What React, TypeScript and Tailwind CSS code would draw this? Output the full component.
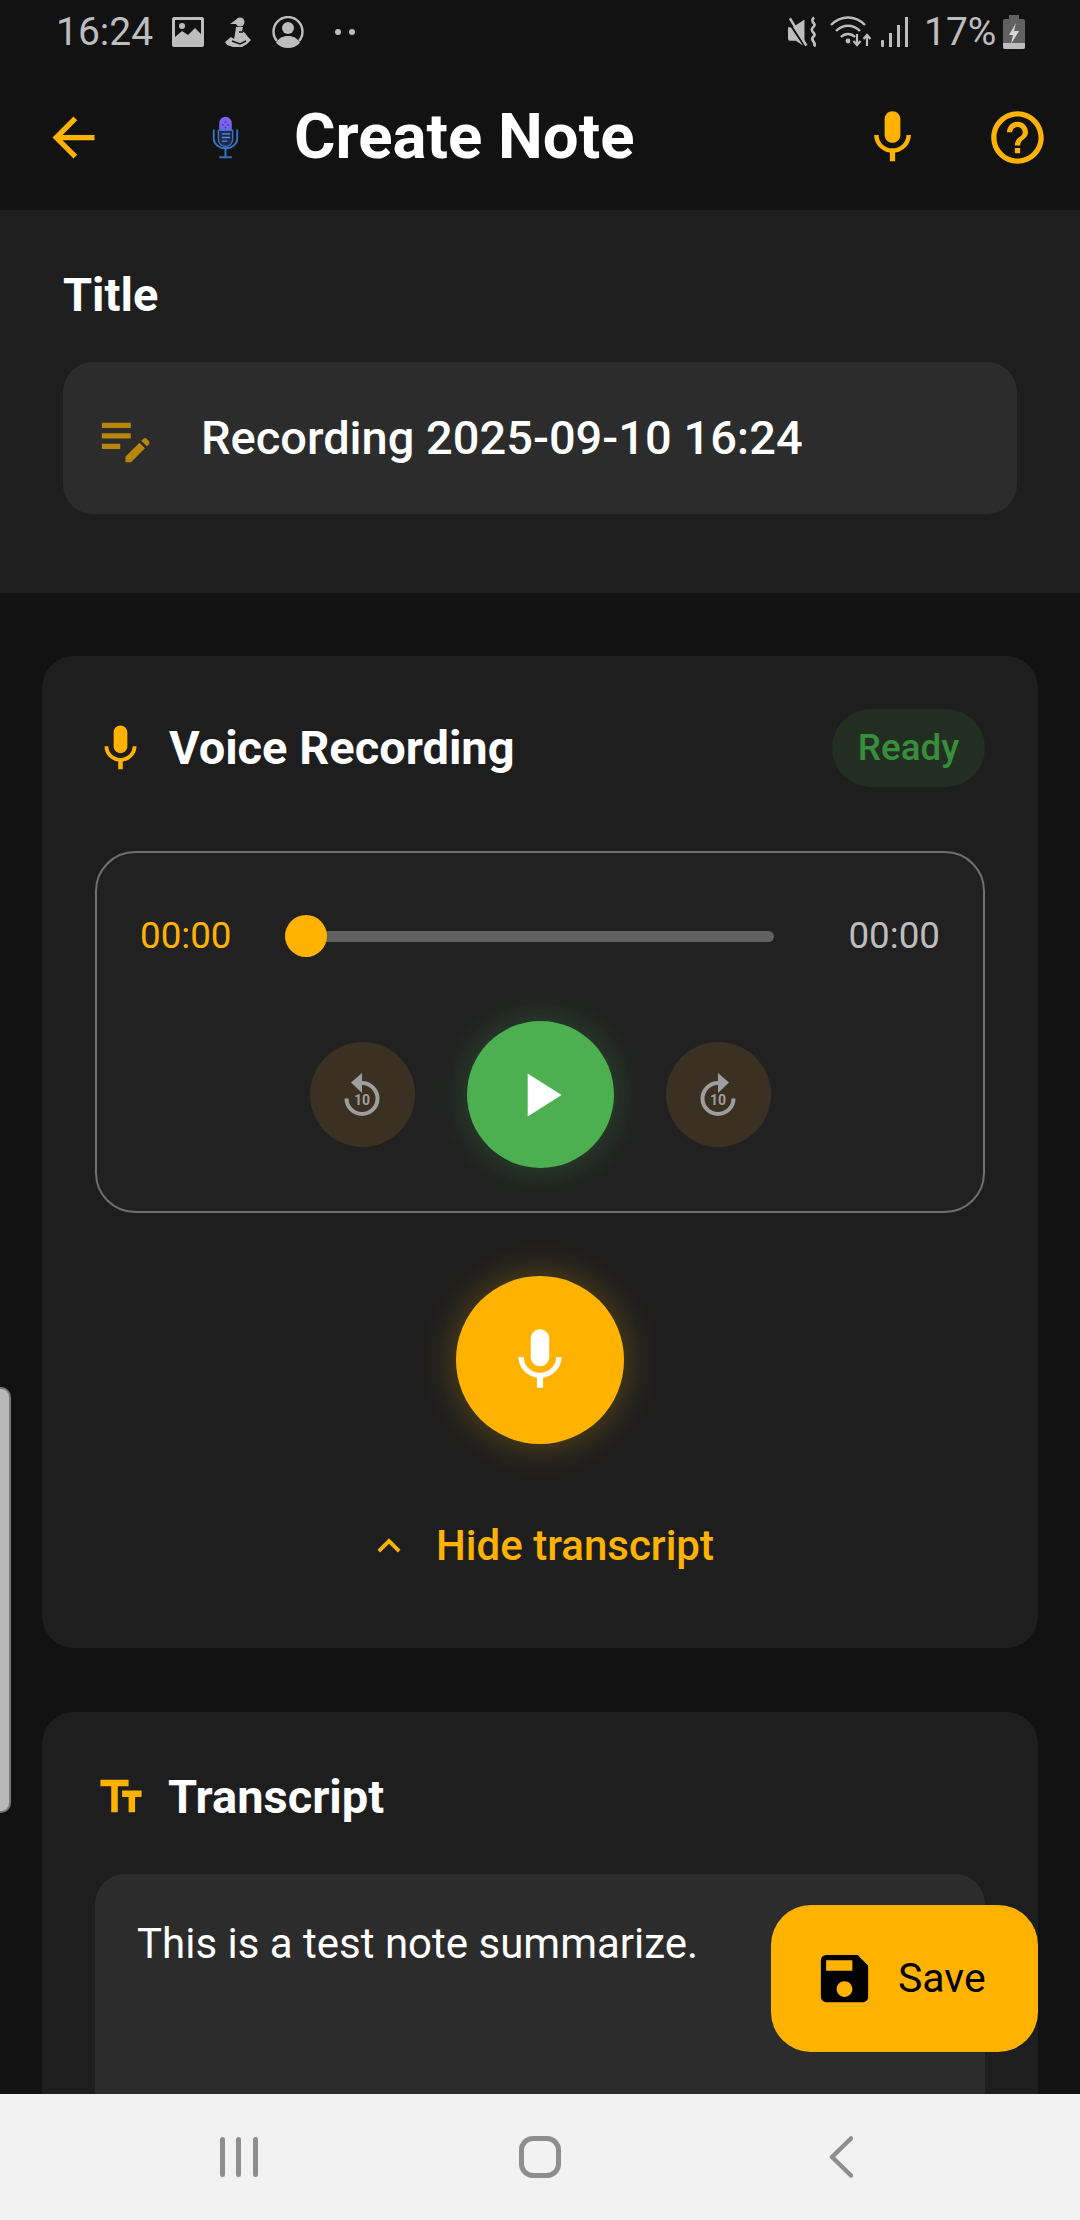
import React from 'react';
import { MdArrowBack, MdMic, MdHelpOutline, MdEditNote, MdPlayArrow, MdExpandLess, MdTextFields, MdSave } from 'react-icons/md';

const Logo = () => (
  <svg width="27" height="45" viewBox="0 0 30 48" fill="none">
    <defs>
      <linearGradient id="logoFill" x1="0" y1="0" x2="0" y2="1">
        <stop offset="0" stopColor="#8b5cf6" />
        <stop offset="1" stopColor="#4f72e8" />
      </linearGradient>
    </defs>
    <rect x="8" y="1" width="14" height="28" rx="7" fill="url(#logoFill)" />
    <circle cx="15" cy="7" r="1" fill="#3b3b8f" />
    <circle cx="12" cy="10" r="1" fill="#3b3b8f" />
    <circle cx="18" cy="10" r="1" fill="#3b3b8f" />
    <circle cx="15" cy="13" r="1" fill="#3b3b8f" />
    <path d="M7 16h16v10a8 8 0 0 1-16 0z" fill="#1d2a4a" stroke="#3f73c4" strokeWidth="1.5" />
    <path d="M2 15v10a13 11 0 0 0 26 0V15M15 36v9M8 46h14" stroke="#3570c0" strokeWidth="2.2" />
    <path d="M11 20h9M11 24h9M11 28h6" stroke="#5f8fe0" strokeWidth="1.4" />
  </svg>
);

// Rewind / forward 10 glyph, the number stays real text
const SkipIcon = ({ flip }: { flip?: boolean }) => (
  <span className="relative flex h-[46px] w-[36px] items-center justify-center">
    <svg width="36" height="46" viewBox="0 0 36 46" fill="none" className={flip ? '-scale-x-100' : ''}>
      <path d="M18 11a15.5 15.5 0 1 1-15.5 15.500" stroke="#9e9e9e" strokeWidth="4" />
      <path d="M18 1v20L7 10.500z" fill="#9e9e9e" />
    </svg>
    <span className="absolute top-[21px] left-0 w-full text-center text-[14px] leading-[14px] font-bold text-[#9e9e9e]">10</span>
  </span>
);

const StatusLeft = () => (
  <div className="flex items-center">
    <span className="w-[96px] text-[39px] leading-[44px] text-[#bdbdbd]">16:24</span>
    <svg width="32" height="30" viewBox="0 0 32 30" className="ml-[20px]">
      <path fillRule="evenodd" d="M2 0h28a2 2 0 0 1 2 2v26a2 2 0 0 1-2 2H2a2 2 0 0 1-2-2V2a2 2 0 0 1 2-2zm1 3v17l7-6 6 4 7-7 6 6V3z" fill="#bdbdbd" />
      <circle cx="10" cy="9" r="3" fill="#bdbdbd" />
    </svg>
    <svg width="27" height="30" viewBox="0 0 27 30" className="ml-[21px]">
      <circle cx="15" cy="5" r="4.500" fill="#bdbdbd" />
      <path d="M5 7l7-5 1 5z" fill="#bdbdbd" />
      <path d="M11 10h7l-1 4 3 2 3 4 3 3-4 4-5 3H8l-6-2-2-3 6-5 3 2 1-5z" fill="#bdbdbd" />
      <path d="M14 15h4M7 24l8 3 6-3" stroke="#121212" strokeWidth="1.400" fill="none" />
    </svg>
    <svg width="32" height="32" viewBox="0 0 32 32" className="ml-[20px]" fill="none">
      <path d="M5 25A14.500 14.500 0 1 1 27 25" stroke="#bdbdbd" strokeWidth="2.400" />
      <circle cx="16" cy="12" r="6" fill="#bdbdbd" />
      <path d="M4 27c3-6 8-7 12-7s9 1 12 7c-3 3-7 5-12 5s-9-2-12-5z" fill="#bdbdbd" />
    </svg>
    <span className="ml-[31px] flex gap-[8px]">
      <span className="h-[6px] w-[6px] rounded-full bg-[#bdbdbd]" />
      <span className="h-[6px] w-[6px] rounded-full bg-[#bdbdbd]" />
    </span>
  </div>
);

const StatusRight = () => (
  <div className="flex items-center">
    <svg width="31" height="32" viewBox="0 0 32 32" fill="none">
      <path d="M0 11h5l12-8v28l-9-6H2a2 2 0 0 1-2-2z" fill="#bdbdbd" />
      <path d="M0 5l18 27" stroke="#121212" strokeWidth="2" />
      <path d="M2 2l17 28" stroke="#bdbdbd" strokeWidth="2.600" />
      <path d="M27 1c-6 5 4 6-1 10-5 5 5 6 0 10-4 4 4 5 1 10" stroke="#bdbdbd" strokeWidth="2.800" />
    </svg>
    <svg width="42" height="32" viewBox="0 0 42 32" fill="none" className="ml-[11px]">
      <path d="M1 9c10-10 24-10 34 0M6 15c7-7 17-7 24 0M11 21c4-4 10-4 14 0" stroke="#bdbdbd" strokeWidth="2.400" />
      <circle cx="18" cy="25" r="2.400" fill="#bdbdbd" />
      <path d="M27 18v10M23.500 25l3.500 4 3.500-4M37 30V20M33.500 23l3.500-4 3.500 4" stroke="#bdbdbd" strokeWidth="2.200" />
    </svg>
    <svg width="27" height="32" viewBox="0 0 27 32" className="ml-[9px]" fill="#bdbdbd">
      <rect x="0" y="24" width="3" height="7" rx="1" />
      <rect x="8" y="17" width="3" height="14" />
      <rect x="16" y="9" width="3" height="22" />
      <rect x="24" y="1" width="3" height="30" />
    </svg>
    <span className="ml-[16px] w-[71px] text-[39px] leading-[44px] text-[#bdbdbd]">17%</span>
    <svg width="22" height="34" viewBox="0 0 22 34" className="ml-[8px]">
      <path d="M6 0h10v4h4a2 2 0 0 1 2 2v26a2 2 0 0 1-2 2H2a2 2 0 0 1-2-2V6a2 2 0 0 1 2-2h4z" fill="#616161" />
      <path d="M0 28h22v4a2 2 0 0 1-2 2H2a2 2 0 0 1-2-2z" fill="#bdbdbd" />
      <path d="M13 8l-7 12h4l-2 9 8-13h-5z" fill="#d6d6d6" />
    </svg>
  </div>
);

export default function App() {
  return (
    <div className="relative flex h-[2220px] w-[1080px] flex-col overflow-hidden bg-[#121212] font-['Roboto',sans-serif] text-white">
      {/* Status bar */}
      <div className="flex h-[64px] items-center justify-between pr-[55px] pl-[56px]">
        <StatusLeft />
        <StatusRight />
      </div>

      {/* App bar */}
      <div className="flex h-[146px] items-center">
        <MdArrowBack className="ml-[42px] text-[63px] text-[#ffb300]" />
        <span className="ml-[107px] flex w-[27px]"><Logo /></span>
        <h1 className="ml-[55px] text-[63.5px] leading-[70px] font-bold">Create Note</h1>
        <MdMic className="ml-auto text-[63px] text-[#ffb300]" />
        <MdHelpOutline className="mr-[31px] ml-[62px] text-[63px] text-[#ffb300]" />
      </div>

      <main className="flex-1 overflow-hidden">
        {/* Title section */}
        <section className="bg-[#1e1e1e] px-[63px] pt-[58px] pb-[79px]">
          <h2 className="text-[47px] leading-[54px] font-bold">Title</h2>
          <div className="mt-[40px] flex h-[152px] items-center rounded-[30px] bg-[#2c2c2c] pl-[31px]">
            <MdEditNote className="text-[63px] text-[#b8860b]" />
            <span className="ml-[44px] text-[47px] leading-[52px] font-medium">Recording 2025-09-10 16:24</span>
          </div>
        </section>

        {/* Voice recording card */}
        <section className="mx-[42px] mt-[63px] rounded-[32px] bg-[#1e1e1e] px-[53px] pt-[53px] pb-[77px]">
          <div className="flex h-[78px] items-center">
            <MdMic className="-ml-[2px] text-[55px] text-[#ffb300]" />
            <h2 className="ml-[21px] text-[47px] leading-[54px] font-bold">Voice Recording</h2>
            <span className="ml-auto flex h-[78px] w-[153px] items-center justify-center rounded-full bg-[#222e22] text-[36.75px] font-medium text-[#388e3c]">Ready</span>
          </div>

          <div className="mt-[64px] h-[362px] rounded-[40px] border-2 border-[#707070] bg-[#212121] px-[43px] pt-[62px]">
            <div className="flex h-[42px] items-center">
              <span className="w-[98px] text-[36.75px] font-[450] text-[#ffb300]">00:00</span>
              <div className="relative ml-[47px] h-[11px] w-[489px] rounded-full bg-[#616161]">
                <span className="absolute -top-[16px] left-0 h-[42px] w-[42px] rounded-full bg-[#ffb300]" />
              </div>
              <span className="ml-auto text-[36.75px] font-[450] text-[#bdbdbd]">00:00</span>
            </div>
            <div className="mt-[64px] flex items-center justify-center gap-[52px]">
              <span className="flex h-[105px] w-[105px] items-center justify-center rounded-full bg-[#3a3122]"><SkipIcon /></span>
              <span className="flex h-[147px] w-[147px] items-center justify-center rounded-full bg-[#4caf50] shadow-[0_0_36px_rgba(76,175,80,0.3)]">
                <MdPlayArrow className="text-[74px] text-white" />
              </span>
              <span className="flex h-[105px] w-[105px] items-center justify-center rounded-full bg-[#3a3122]"><SkipIcon flip /></span>
            </div>
          </div>

          <div className="mt-[63px] flex justify-center">
            <span className="flex h-[168px] w-[168px] items-center justify-center rounded-full bg-[#ffb300] shadow-[0_0_36px_rgba(255,179,0,0.3)]">
              <MdMic className="text-[74px] text-white" />
            </span>
          </div>

          <div className="mt-[77px] flex h-[50px] items-center justify-center">
            <MdExpandLess className="text-[46px] text-[#ffb300]" />
            <span className="ml-[24px] text-[42px] leading-[50px] font-medium text-[#ffb300]">Hide transcript</span>
          </div>
        </section>

        {/* Transcript card */}
        <section className="mx-[42px] mt-[64px] h-[500px] rounded-[32px] bg-[#1e1e1e] px-[53px] pt-[57px]">
          <div className="flex h-[56px] items-center">
            <MdTextFields className="text-[52px] text-[#ffb300]" />
            <h2 className="ml-[21px] text-[47px] leading-[54px] font-bold">Transcript</h2>
          </div>
          <div className="mt-[49px] h-[400px] rounded-[30px] bg-[#2c2c2c] px-[42px] pt-[43px]">
            <p className="text-[42px] leading-[54px]">This is a test note summarize.</p>
          </div>
        </section>
      </main>

      {/* Navigation bar */}
      <nav className="grid h-[126px] grid-cols-3 items-center bg-[#f2f2f2] px-[88px]">
        <svg width="38" height="42" viewBox="0 0 38 42" className="justify-self-center" fill="#8e8e8e">
          <rect x="0" y="1" width="5" height="40" rx="2.500" />
          <rect x="16" y="1" width="5" height="40" rx="2.500" />
          <rect x="33" y="1" width="5" height="40" rx="2.500" />
        </svg>
        <span className="h-[42px] w-[42px] justify-self-center rounded-[14px] border-[5px] border-[#8e8e8e]" />
        <svg width="24" height="42" viewBox="0 0 24 42" className="justify-self-center" fill="none">
          <path d="M22 2.500L3 21l19 18.500" stroke="#8e8e8e" strokeWidth="4.500" strokeLinecap="round" strokeLinejoin="round" />
        </svg>
      </nav>

      {/* Edge panel handle */}
      <div className="absolute top-[1387px] left-0 h-[426px] w-[11px] rounded-r-[10px] border-y-2 border-r-2 border-[#777777] bg-[#b8b8b8]" />

      {/* Save FAB */}
      <button className="absolute top-[1905px] left-[771px] flex h-[147px] w-[267px] items-center rounded-[40px] bg-[#ffb300] pl-[42px] text-black">
        <MdSave className="text-[63px]" />
        <span className="ml-[22px] text-[41px] font-[450]">Save</span>
      </button>
    </div>
  );
}
